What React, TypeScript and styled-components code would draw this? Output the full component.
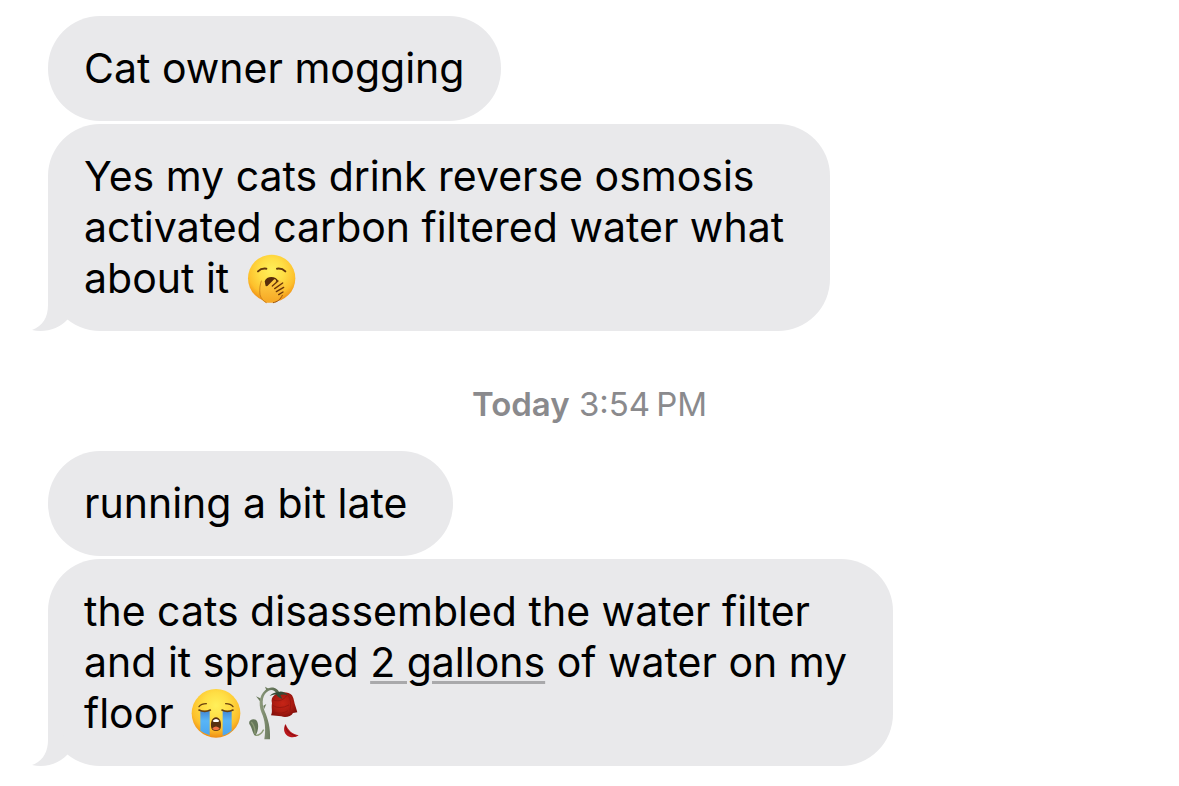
import React from "react";
import styled, { createGlobalStyle } from "styled-components";

const GlobalStyle = createGlobalStyle`
  body {
    margin: 0;
    background: #ffffff;
    font-family: Inter, "Liberation Sans", sans-serif;
  }
`;

const Conversation = styled.main`
  display: flex;
  flex-direction: column;
  padding: 16px 48px 20px;
`;

const MessageGroup = styled.section`
  display: flex;
  flex-direction: column;
  align-items: flex-start;
  gap: 3px;
`;

const Bubble = styled.div<{ $wide?: boolean }>`
  position: relative;
  padding: 27px ${(p) => (p.$wide ? 46 : 36)}px 27px 36px;
  border-radius: 52px;
  background: #e9e9eb;
`;

const Message = styled.p`
  margin: 0;
  color: #000000;
  font-size: 41px;
  line-height: 51px;
`;

const DetectedLink = styled.a`
  color: inherit;
  text-decoration: underline;
  text-decoration-color: #a9a9ab;
  text-decoration-thickness: 3px;
  text-underline-offset: 4px;
`;

const Timestamp = styled.time`
  padding: 53px 0 27px;
  color: #8a8a8d;
  font-size: 33px;
  line-height: 40px;
  text-align: center;
`;

const Day = styled.span`
  font-weight: 600;
`;

const TailShape = styled.svg`
  position: absolute;
  left: -16px;
  bottom: 0;
  width: 36px;
  height: 56px;
  fill: #e9e9eb;
`;

const Emoji = styled.svg`
  width: 52px;
  height: 52px;
  margin: -4px 0 -4px 5px;
  vertical-align: -7px;
  overflow: visible;
`;

function Tail() {
  return (
    <TailShape viewBox="0 0 36 56" aria-hidden="true">
      <path d="M16 0V30C16 42 11 51 0 55C13 58 27 54 36 44V38L22 0Z" />
    </TailShape>
  );
}

function FaceGradient({ id }: { id: string }) {
  return (
    <radialGradient id={id} cx="50%" cy="34%" r="66%">
      <stop offset="0" stopColor="#fff05a" />
      <stop offset="0.4" stopColor="#ffde45" />
      <stop offset="0.76" stopColor="#fdc02c" />
      <stop offset="1" stopColor="#ee8c14" />
    </radialGradient>
  );
}

function YawningFace() {
  return (
    <Emoji viewBox="51 21 156 156" role="img" aria-label="Yawning face">
      <defs>
        <FaceGradient id="yawn-face" />
        <linearGradient id="yawn-hand" x1="0" y1="0" x2="0" y2="1">
          <stop offset="0" stopColor="#ffce45" />
          <stop offset="1" stopColor="#f6a724" />
        </linearGradient>
      </defs>
      <circle cx="128" cy="100" r="71" fill="url(#yawn-face)" />
      <g fill="none" stroke="#65380b" strokeWidth="6" strokeLinecap="round">
        <path d="M87 79Q97 69 112 71" />
        <path d="M144 71Q159 69 169 79" />
      </g>
      <path d="M107 109C112 92 142 92 148 109L136 124H110Z" fill="#582c0b" />
      <path
        d="M96 111C102 105 107 113 107 121L110 128L134 104C139 100 144 106 140 111L149 108C155 104 161 110 156 115L160 116C167 118 166 126 160 130C167 132 166 139 160 143C158 154 149 171 132 173H110C96 166 91 150 92 136Z"
        fill="url(#yawn-hand)"
      />
      <g fill="none" stroke="#6b3508" strokeLinecap="round">
        <path d="M130 123L147 108M137 131L161 114M142 140L164 127M149 149L162 141" strokeWidth="4" />
        <path d="M97 108C93 119 91 132 93 149C96 160 102 168 112 173" strokeWidth="2" stroke="#b96a11" />
        <path d="M160 151C154 164 145 171 133 173" strokeWidth="3" stroke="#9a520d" />
      </g>
    </Emoji>
  );
}

function CryingFace() {
  return (
    <Emoji viewBox="26 21 156 156" role="img" aria-label="Loudly crying face">
      <defs>
        <FaceGradient id="cry-face" />
        <linearGradient id="cry-tear" x1="0" y1="0" x2="0" y2="1">
          <stop offset="0" stopColor="#4388d4" />
          <stop offset="0.4" stopColor="#58b5f7" />
          <stop offset="1" stopColor="#4ba5ee" />
        </linearGradient>
      </defs>
      <circle cx="104" cy="100" r="73" fill="url(#cry-face)" />
      <path d="M57 93H85V166Q70 161 57 152ZM124 93H151V152Q139 162 124 167Z" fill="url(#cry-tear)" />
      <g fill="none" stroke="#69400d" strokeWidth="4" strokeLinecap="round">
        <path d="M53 80Q60 71 75 71M133 71Q148 71 155 80" />
        <path d="M53 90Q70 98 87 90M122 90Q138 98 155 90" strokeWidth="5" />
      </g>
      <path d="M104 112C92 112 86 128 90 144C92 156 116 156 118 144C122 128 116 112 104 112Z" fill="#573011" />
      <path d="M94 122Q104 112 114 122L111 126H97Z" fill="#ffffff" />
      <path d="M93 145Q104 134 115 145C113 153 95 153 93 145Z" fill="#ef7044" />
    </Emoji>
  );
}

function WiltedRose() {
  return (
    <Emoji viewBox="204 23 156 156" role="img" aria-label="Wilted flower">
      <defs>
        <linearGradient id="rose-stem" x1="0" y1="0" x2="1" y2="0">
          <stop offset="0" stopColor="#8d9a7c" />
          <stop offset="1" stopColor="#4e6047" />
        </linearGradient>
        <radialGradient id="rose-head" cx="45%" cy="45%" r="60%">
          <stop offset="0" stopColor="#c62416" />
          <stop offset="0.6" stopColor="#ab1b11" />
          <stop offset="1" stopColor="#800e0a" />
        </radialGradient>
      </defs>
      <path
        d="M256 180C261 148 258 123 248 101C236 72 242 39 268 27C284 20 298 30 302 42L295 46C289 34 279 29 269 34C251 43 246 69 257 96C267 118 275 147 273 180Z"
        fill="url(#rose-stem)"
      />
      <path d="M244 57L231 51L243 66ZM253 79L262 74L255 90ZM262 33L258 22L270 29Z" fill="#6c7c5d" />
      <path d="M211 134C207 122 224 116 232 123C241 135 238 155 229 170C220 162 221 149 211 134Z" fill="#66775a" />
      <path d="M217 128Q229 142 228 164M229 168Q244 170 254 151" fill="none" stroke="#8a9974" strokeWidth="4" />
      <path
        d="M286 48C296 37 329 35 339 48C346 58 345 72 350 82L355 99L342 101C337 112 318 116 307 111L276 108C282 96 276 87 279 72C276 61 279 53 286 48Z"
        fill="url(#rose-head)"
      />
      <path d="M281 61C299 69 314 62 324 48M281 78Q301 92 330 77M328 49Q339 64 333 94M286 99Q307 106 327 94" fill="none" stroke="#8e140e" strokeWidth="2" />
      <path d="M272 50Q284 38 297 39Q310 32 327 48Q311 43 304 47L310 59Q295 53 293 46Q283 44 272 50Z" fill="#354a35" />
      <path d="M320 134C312 145 314 162 326 170C337 177 352 174 359 168C341 165 326 153 320 134Z" fill="#b9171b" />
      <path d="M319 139Q321 161 350 170" fill="none" stroke="#870d12" strokeWidth="3" />
    </Emoji>
  );
}

export default function App() {
  return (
    <>
      <GlobalStyle />
      <Conversation>
        <MessageGroup>
          <Bubble>
            <Message>Cat owner mogging</Message>
          </Bubble>
          <Bubble $wide>
            <Tail />
            <Message>
              Yes my cats drink reverse osmosis
              <br />
              activated carbon filtered water what
              <br />
              about it <YawningFace />
            </Message>
          </Bubble>
        </MessageGroup>
        <Timestamp>
          <Day>Today</Day> 3:54&#8239;PM
        </Timestamp>
        <MessageGroup>
          <Bubble $wide>
            <Message>running a bit late</Message>
          </Bubble>
          <Bubble $wide>
            <Tail />
            <Message>
              the cats disassembled the water filter
              <br />
              and it sprayed <DetectedLink href="#measurement">2 gallons</DetectedLink> of water on my
              <br />
              floor <CryingFace />
              <WiltedRose />
            </Message>
          </Bubble>
        </MessageGroup>
      </Conversation>
    </>
  );
}
